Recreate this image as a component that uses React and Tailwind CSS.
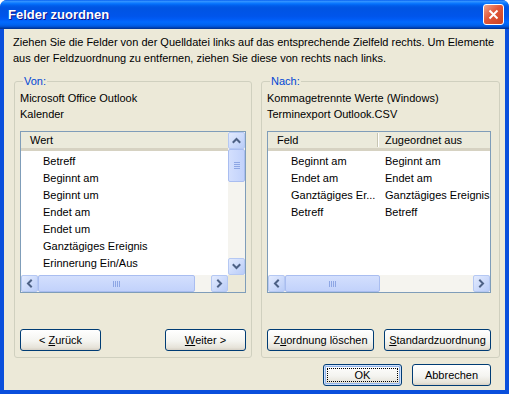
import React from 'react';

const Chevron = ({ dir }) => {
  const d = {
    up: 'M1.5 6 L4.5 3 L7.5 6',
    down: 'M1.5 3 L4.5 6 L7.5 3',
    left: 'M6 1.5 L3 4.5 L6 7.5',
    right: 'M3 1.5 L6 4.5 L3 7.5',
  }[dir];
  return (
    <svg width="9" height="9" viewBox="0 0 9 9">
      <path d={d} fill="none" stroke="#4d6185" strokeWidth="2" strokeLinecap="square" />
    </svg>
  );
};

const ArrowBtn = ({ dir }) => (
  <div className="w-[17px] h-[17px] shrink-0 rounded-[2px] border border-[#b5c8f3] bg-[linear-gradient(135deg,#e3ebfe,#b9ccf8)] flex items-center justify-center">
    <Chevron dir={dir} />
  </div>
);

const Thumb = ({ vertical, className }) => (
  <div
    className={
      'rounded-[2px] border border-[#a9bdf0] flex items-center justify-center ' +
      (vertical
        ? 'bg-[linear-gradient(to_right,#d3dffd,#c2d2fb)] flex-col gap-[1px] '
        : 'bg-[linear-gradient(to_bottom,#d3dffd,#c2d2fb)] gap-[1px] ') +
      className
    }
  >
    {[0, 1, 2, 3].map((i) => (
      <div
        key={i}
        className={vertical ? 'w-[6px] h-[1px] bg-[#8da6e4]' : 'w-[1px] h-[6px] bg-[#8da6e4]'}
      />
    ))}
  </div>
);

const Button = ({ children, className = '', isDefault }) => (
  <div
    className={
      'h-[22px] flex rounded-[3px] border border-[#003c74] bg-[linear-gradient(to_bottom,#ffffff,#f4f4f0_55%,#e6e3d9_88%,#d6d0c5)] ' +
      (isDefault ? 'shadow-[inset_0_0_0_1px_#cee0fb,inset_0_0_0_2px_#91b4ea] ' : '') +
      className
    }
  >
    {isDefault ? (
      <div className="flex-1 m-[3px] border border-dotted border-black flex items-center justify-center">
        {children}
      </div>
    ) : (
      <div className="flex-1 flex items-center justify-center">{children}</div>
    )}
  </div>
);

const Header = ({ children }) => (
  <div className="h-[19px] shrink-0 bg-[#ebeadb] border-b-[3px] border-[#d6d2c2] flex items-center">
    {children}
  </div>
);

const GroupBox = ({ label, line1, line2, list, buttons, className }) => (
  <fieldset className={'border border-[#d0d0bf] rounded-[3px] px-[5px] h-[283px] ' + className}>
    <legend className="px-[1px] ml-[3px] leading-[13px] text-[#0046d5]">{label}</legend>
    <div className="mt-[2px] leading-[16px]">{line1}</div>
    <div className="leading-[16px]">{line2}</div>
    <div className="mt-[9px]">{list}</div>
    <div className="mt-[36px] flex justify-between">{buttons}</div>
  </fieldset>
);

const leftItems = [
  'Betreff',
  'Beginnt am',
  'Beginnt um',
  'Endet am',
  'Endet um',
  'Ganztägiges Ereignis',
  'Erinnerung Ein/Aus',
];

const rightItems = [
  ['Beginnt am', 'Beginnt am'],
  ['Endet am', 'Endet am'],
  ['Ganztägiges Er...', 'Ganztägiges Ereignis'],
  ['Betreff', 'Betreff'],
];

const LeftList = () => (
  <div className="w-[226px] h-[162px] border border-[#7f9db9] bg-white flex flex-col">
    <div className="flex h-[143px]">
      <div className="w-[207px] flex flex-col overflow-hidden">
        <Header>
          <span className="pl-[9px]">Wert</span>
        </Header>
        <div className="pt-[2px]">
          {leftItems.map((t) => (
            <div key={t} className="h-[17px] leading-[17px] pl-[22px] whitespace-nowrap">
              {t}
            </div>
          ))}
        </div>
      </div>
      <div className="w-[17px] flex flex-col bg-[#f5f4ef]">
        <ArrowBtn dir="up" />
        <Thumb vertical className="h-[33px]" />
        <div className="flex-1" />
        <ArrowBtn dir="down" />
      </div>
    </div>
    <div className="flex h-[17px]">
      <div className="w-[207px] flex bg-[#f5f4ef]">
        <ArrowBtn dir="left" />
        <Thumb className="w-[157px]" />
        <div className="flex-1" />
        <ArrowBtn dir="right" />
      </div>
      <div className="w-[17px] bg-[#ece9d8]" />
    </div>
  </div>
);

const RightList = () => (
  <div className="w-[224px] h-[162px] border border-[#7f9db9] bg-white flex flex-col">
    <div className="h-[143px] flex flex-col overflow-hidden">
      <Header>
        <span className="w-[109px] pl-[9px]">Feld</span>
        <span className="w-[1px] h-[14px] bg-[#c7c5b2] shadow-[1px_0_0_#fff]" />
        <span className="pl-[7px]">Zugeordnet aus</span>
      </Header>
      <div className="pt-[2px]">
        {rightItems.map(([a, b]) => (
          <div key={a} className="h-[17px] leading-[17px] flex whitespace-nowrap">
            <span className="w-[117px] pl-[23px]">{a}</span>
            <span>{b}</span>
          </div>
        ))}
      </div>
    </div>
    <div className="flex h-[17px] bg-[#f5f4ef]">
      <ArrowBtn dir="left" />
      <Thumb className="w-[95px]" />
      <div className="flex-1" />
      <ArrowBtn dir="right" />
    </div>
  </div>
);

export default function App() {
  return (
    <div className="w-[509px] h-[394px] flex flex-col overflow-hidden rounded-t-[7px] bg-[#0a4fdc] text-[11px] text-black font-['Liberation_Sans',Arial,sans-serif]">
      {/* Title bar */}
      <div className="h-[29px] shrink-0 flex items-center justify-between pl-[8px] pr-[5px] bg-[linear-gradient(to_bottom,#0058ee_0%,#3593ff_4%,#288eff_7%,#127dff_10%,#036ffc_14%,#0262ee_18%,#0057e5_24%,#0054e3_30%,#0055eb_56%,#005bf5_66%,#026afe_76%,#0062ef_86%,#0052d6_92%,#0040ab_96%,#003092_100%)]">
        <span className="text-white font-bold text-[13px] [text-shadow:1px_1px_0_#0f1089]">
          Felder zuordnen
        </span>
        <div className="w-[21px] h-[21px] rounded-[3px] border border-white bg-[linear-gradient(135deg,#f0a58c,#e0573a_45%,#cc4323)] flex items-center justify-center">
          <svg width="11" height="11" viewBox="0 0 11 11">
            <path d="M1.5 1.5 L9.5 9.5 M9.5 1.5 L1.5 9.5" stroke="#fff" strokeWidth="2" />
          </svg>
        </div>
      </div>

      {/* Body */}
      <div className="flex-1 flex flex-col mx-[4px] mb-[4px] bg-[#ece9d8] pl-[10px] pr-[5px] pt-[5px]">
        <p className="leading-[16px] ml-[-1px]">
          Ziehen Sie die Felder von der Quelldatei links auf das entsprechende Zielfeld rechts. Um Elemente
          aus der Feldzuordnung zu entfernen, ziehen Sie diese von rechts nach links.
        </p>

        <div className="mt-[9px] flex gap-[9px]">
          <GroupBox
            className="w-[238px]"
            label="Von:"
            line1="Microsoft Office Outlook"
            line2="Kalender"
            list={<LeftList />}
            buttons={
              <>
                <Button className="w-[81px]">
                  &lt;&nbsp;<span className="underline">Z</span>urück
                </Button>
                <Button className="w-[81px]">
                  <span className="underline">W</span>eiter &gt;
                </Button>
              </>
            }
          />
          <GroupBox
            className="w-[239px]"
            label="Nach:"
            line1="Kommagetrennte Werte (Windows)"
            line2="Terminexport Outlook.CSV"
            list={<RightList />}
            buttons={
              <div className="w-[224px] flex justify-between">
                <Button className="w-[107px]">
                  Z<span className="underline">u</span>ordnung löschen
                </Button>
                <Button className="w-[107px]">
                  <span className="underline">S</span>tandardzuordnung
                </Button>
              </div>
            }
          />
        </div>

        <div className="mt-[6px] flex justify-end gap-[10px] pr-[9px]">
          <Button isDefault className="w-[79px]">
            OK
          </Button>
          <Button className="w-[79px]">Abbrechen</Button>
        </div>
      </div>
    </div>
  );
}
